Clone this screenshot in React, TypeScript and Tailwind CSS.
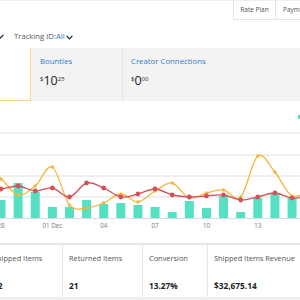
import React from "react";

const barTops = [200, 183, 192, 207, 207, 200, 204, 203, 205, 207, 212, 201, 208, 196, 212, 198, 193, 198];
const red = [190, 189, 186, 191, 188, 197, 183, 188, 197, 194, 189, 195, 197, 196, 195, 200, 197, 193, 198, 197];
const yellow = [170, 179, 195, 186, 167, 205, 208, 203, 194, 202, 191, 183, 198, 193, 190, 197, 156, 172, 196, 190];
const ticks = [
  { i: 0, label: "28" },
  { i: 3, label: "01 Dec" },
  { i: 6, label: "04" },
  { i: 9, label: "07" },
  { i: 12, label: "10" },
  { i: 15, label: "13" },
];

const cx = (i: number) => 1 + 17.12 * i;

function smooth(pts: [number, number][]) {
  let d = `M${pts[0][0]},${pts[0][1]}`;
  for (let i = 0; i < pts.length - 1; i++) {
    const p0 = pts[i - 1] || pts[i];
    const p1 = pts[i];
    const p2 = pts[i + 1];
    const p3 = pts[i + 2] || p2;
    const c1x = p1[0] + (p2[0] - p0[0]) / 6;
    const c1y = p1[1] + (p2[1] - p0[1]) / 6;
    const c2x = p2[0] - (p3[0] - p1[0]) / 6;
    const c2y = p2[1] - (p3[1] - p1[1]) / 6;
    d += ` C${c1x},${c1y} ${c2x},${c2y} ${p2[0]},${p2[1]}`;
  }
  return d;
}

// series arrays carry one extra point on each side so the curves run off the edges
const toPts = (ys: number[]) => ys.map((y, k) => [cx(k - 1), y] as [number, number]);

function Chevron({ className }: { className?: string }) {
  return (
    <svg width="7" height="5" viewBox="0 0 7 5" className={className}>
      <path d="M0.6 0.8 L3.5 3.8 L6.4 0.8" fill="none" stroke="#222" strokeWidth="1.2" />
    </svg>
  );
}

function Chart() {
  const redPts = toPts(red);
  const yellowPts = toPts(yellow);
  return (
    <svg width="300" height="142" viewBox="0 101 300 142" className="block">
      {[133, 155, 176, 197].map((y) => (
        <line key={y} x1="0" x2="300" y1={y} y2={y} stroke="#e9e9e9" strokeWidth="1.5" />
      ))}
      <rect x="298" y="115" width="4" height="4" fill="#55e0c3" />
      {barTops.map((t, i) => (
        <rect key={i} x={cx(i) - 4.5} y={t} width="9" height={218 - t} fill="#55e0c3" />
      ))}
      <line x1="0" x2="300" y1="218.5" y2="218.5" stroke="#d3dce8" strokeWidth="1" />
      {ticks.map((t) => (
        <text
          key={t.label}
          x={cx(t.i)}
          y="228"
          textAnchor="middle"
          fontSize="6.2"
          fill="#777"
          fontFamily="'Open Sans', sans-serif"
        >
          {t.label}
        </text>
      ))}
      <path d={smooth(yellowPts)} fill="none" stroke="#f4b63a" strokeWidth="1.3" />
      <path d={smooth(redPts)} fill="none" stroke="#d4505a" strokeWidth="1.3" />
      {yellowPts.slice(1, -1).map(([x, y], i) => (
        <circle key={i} cx={x} cy={y} r="1.7" fill="#f4b63a" />
      ))}
      {redPts.slice(1, -1).map(([x, y], i) => (
        <circle key={i} cx={x} cy={y} r="2.4" fill="#d4505a" />
      ))}
    </svg>
  );
}

const stats = [
  { label: "Shipped Items", value: "12", cls: "w-[75px] -ml-[13px]" },
  { label: "Returned Items", value: "21", cls: "w-[80px] border-l border-[#e6e6e6]" },
  { label: "Conversion", value: "13.27%", cls: "w-[65px] border-l border-[#e6e6e6]" },
  { label: "Shipped Items Revenue", value: "$32,675.14", cls: "flex-1 border-l border-[#e6e6e6]" },
];

export default function App() {
  return (
    <div className="w-[300px] h-[300px] overflow-hidden bg-[#eeeeee] font-['Open_Sans',sans-serif]">
      <div className="mt-[1px] bg-white">
        <div className="flex h-[19px] justify-end">
          <div className="flex w-[42px] items-center justify-center border-b border-l border-[#e3e3e3] text-[6.5px] text-[#555]">
            Rate Plan
          </div>
          <div className="flex w-[25px] items-center border-b border-l border-[#e3e3e3] pl-[7px] text-[6.5px] text-[#555] whitespace-nowrap">
            Payments
          </div>
        </div>
        <div className="flex h-[28px] items-center pt-[5px]">
          <Chevron className="-ml-[3px]" />
          <span className="ml-[10px] text-[7.7px] leading-none text-[#555]">
            Tracking ID:<span className="text-[#2f7bd9]">All</span>
          </span>
          <Chevron className="ml-[1px] mt-[1px]" />
        </div>
        <div className="flex h-[53px]">
          <div className="w-[31px] border-r border-b border-[#f6d48a] bg-white" />
          <div className="w-[91px] bg-[#f3f3f3] pl-[9px] pt-[8px]">
            <div className="text-[7.8px] leading-[10px] text-[#2f7bd9]">Bounties</div>
            <div className="mt-[9px] flex items-start text-[#222]">
              <span className="mt-[1px] text-[6px] leading-none">$</span>
              <span className="text-[12.5px] leading-none">10</span>
              <span className="mt-[1px] text-[6px] leading-none">25</span>
            </div>
          </div>
          <div className="flex-1 border-l border-[#e2e2e2] bg-[#f3f3f3] pl-[8px] pt-[8px] whitespace-nowrap">
            <div className="text-[7.8px] leading-[10px] text-[#2f7bd9]">Creator Connections</div>
            <div className="mt-[9px] flex items-start text-[#222]">
              <span className="mt-[1px] text-[6px] leading-none">$</span>
              <span className="text-[12.5px] leading-none">0</span>
              <span className="mt-[1px] text-[6px] leading-none">00</span>
            </div>
          </div>
        </div>
        <Chart />
        <div className="h-[2px] bg-[#e6e6e6]" />
        <div className="flex h-[52px]">
          {stats.map((s) => (
            <div key={s.label} className={`${s.cls} shrink-0 pl-[6px] pt-[8px] whitespace-nowrap`}>
              <div className="text-[7.4px] leading-[10px] text-[#555]">{s.label}</div>
              <div className="mt-[18px] text-[8.3px] font-bold leading-[10px] text-[#222]">{s.value}</div>
            </div>
          ))}
        </div>
      </div>
    </div>
  );
}
